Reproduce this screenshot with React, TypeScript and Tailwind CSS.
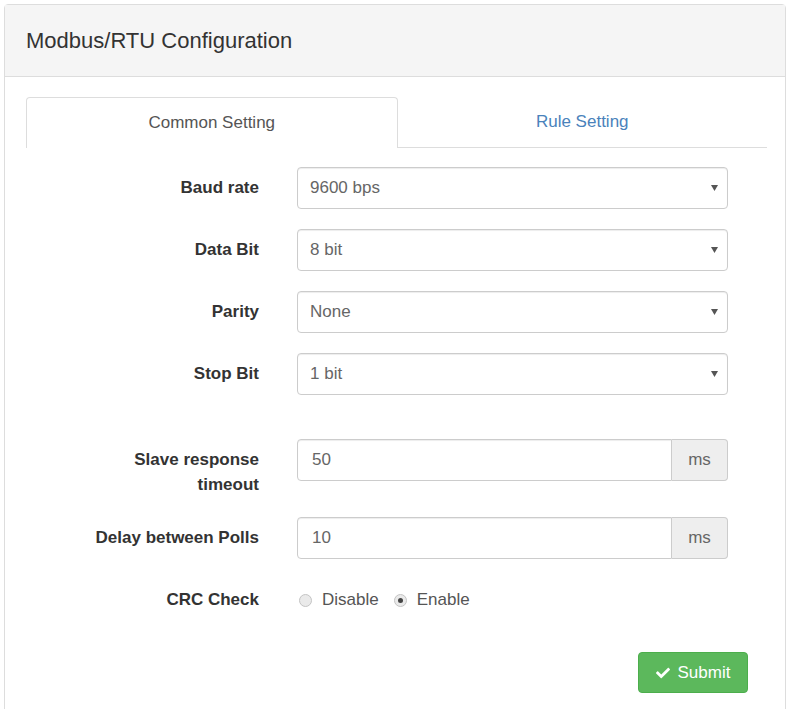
import React from "react";
import { FaCheck } from "react-icons/fa";

const selects = [
  { label: "Baud rate", value: "9600 bps" },
  { label: "Data Bit", value: "8 bit" },
  { label: "Parity", value: "None" },
  { label: "Stop Bit", value: "1 bit" },
];

// little dropdown caret drawn at the right edge of each select
const Caret = () => (
  <svg width="7" height="6" viewBox="0 0 7 6" className="shrink-0">
    <path d="M0 0 H7 L3.5 6 Z" fill="#555" />
  </svg>
);

const Label = ({ children }: { children: React.ReactNode }) => (
  <div className="pt-[8px] text-right text-[17px] font-bold leading-[25px] text-[#333]">{children}</div>
);

const SelectBox = ({ value }: { value: string }) => (
  <div className="flex h-[42px] items-center justify-between rounded-[4px] border border-[#ccc] bg-white pl-[12px] pr-[9px] shadow-[inset_0_1px_1px_rgba(0,0,0,0.075)]">
    <span className="text-[17px] text-[#666]">{value}</span>
    <Caret />
  </div>
);

const MsInput = ({ value }: { value: string }) => (
  <div className="flex h-[42px]">
    <div className="flex flex-1 items-center rounded-l-[4px] border border-[#ccc] pl-[14px] text-[17px] text-[#666] shadow-[inset_0_1px_1px_rgba(0,0,0,0.075)]">
      {value}
    </div>
    <div className="flex w-[56px] items-center justify-center rounded-r-[4px] border border-l-0 border-[#ccc] bg-[#eee] text-[17px] text-[#666]">
      ms
    </div>
  </div>
);

const Radio = ({ checked, label }: { checked?: boolean; label: string }) => (
  <label className="flex items-center gap-[10px]">
    <span className="flex h-[13px] w-[13px] items-center justify-center rounded-full border border-[#c4c4c4] bg-[#eaeaea]">
      {checked && <span className="h-[5px] w-[5px] rounded-full bg-[#444]" />}
    </span>
    <span className="text-[17px] text-[#555]">{label}</span>
  </label>
);

export default function App() {
  return (
    <div className="min-h-[709px] bg-white pl-[4px] pt-[4px] font-['Liberation_Sans',Arial,sans-serif]">
      <div className="w-[782px] rounded-[4px] border border-[#ddd]">
        <div className="flex h-[72px] items-center border-b border-[#ddd] bg-[#f5f5f5] pl-[21px]">
          <h3 className="text-[22px] text-[#333]">Modbus/RTU Configuration</h3>
        </div>

        <div className="pb-[40px] pl-[21px] pr-[18px] pt-[20px]">
          {/* tabs */}
          <div className="flex h-[51px] text-[17px]">
            <div className="flex flex-1 items-center justify-center rounded-t-[4px] border border-b-0 border-[#ddd] text-[#555]">
              Common Setting
            </div>
            <div className="flex flex-1 items-center justify-center border-b border-[#ddd] text-[#4a82bb]">
              Rule Setting
            </div>
          </div>

          {/* form */}
          <div className="mt-[19px] grid w-[702px] grid-cols-[233px_431px] gap-x-[38px] gap-y-[20px]">
            {selects.map((s) => (
              <React.Fragment key={s.label}>
                <Label>{s.label}</Label>
                <SelectBox value={s.value} />
              </React.Fragment>
            ))}

            <div className="col-span-2 h-[4px]" />

            <Label>
              Slave response
              <br />
              timeout
            </Label>
            <MsInput value="50" />

            <Label>Delay between Polls</Label>
            <MsInput value="10" />

            <Label>CRC Check</Label>
            <div className="flex h-[42px] items-center gap-[15px] pl-[2px]">
              <Radio label="Disable" />
              <Radio label="Enable" checked />
            </div>
          </div>

          <div className="mt-[31px] flex w-[722px] justify-end">
            <button className="flex h-[41px] w-[110px] items-center justify-center gap-[8px] rounded-[4px] border border-[#4cae4c] bg-[#5cb85c] text-[17px] text-white">
              <FaCheck className="h-[14px] w-[14px]" />
              Submit
            </button>
          </div>
        </div>
      </div>
    </div>
  );
}
